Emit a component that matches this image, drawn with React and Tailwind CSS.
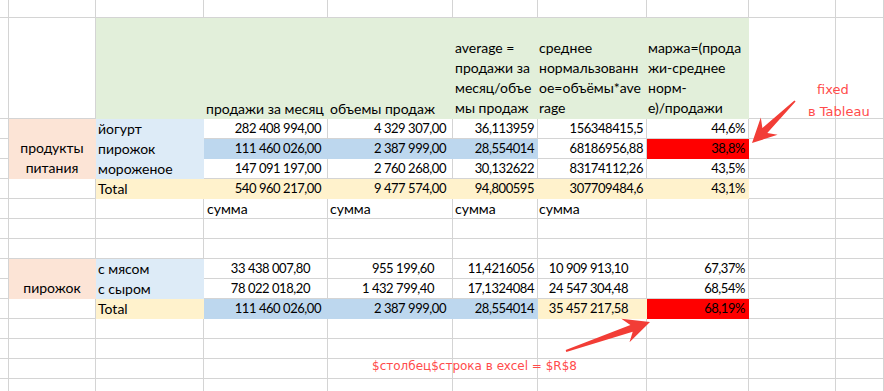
import React from "react";

const grid = "border-[#d4d4d4]";
const fills = {
  g: "bg-[#e2efda] border-[#e2efda]",
  p: "bg-[#fce4d6] border-[#fce4d6]",
  lb: "bg-[#ddebf7] border-[#ddebf7]",
  y: "bg-[#fff2cc] border-[#fff2cc]",
  b: "bg-[#bdd7ee] border-[#bdd7ee]",
  r: "bg-[#ff0000] border-[#ff0000]",
};

// c(text, fill, extra classes)
const c = (t = "", f = null, x = "") => ({ t, f, x });
const N = "justify-end text-[13px] tracking-[-0.45px]";
const R = `${N} pr-[6px]`;
const Rg = `${N} pr-[3px]`;
const Rb = `${N} pr-[18px]`;
const L = "pl-[2px]";

const empty = (n) => Array.from({ length: n }, () => c());

const header = [
  c(),
  c(),
  c("", "g"),
  c("продажи за месяц", "g", "pl-[2px]"),
  c("объемы продаж", "g", "pl-[2px]"),
  c(["average =", "продажи за", "месяц/объе", "мы продаж"], "g", "pl-[2px]"),
  c(["среднее", "нормальзованн", "ое=объёмы*ave", "rage"], "g", "pl-[1px]"),
  c(["маржа=(прода", "жи-среднее", "норм-", "е)/продажи"], "g", "pl-[1px]"),
  c(),
  c(),
];

const rows = [
  [
    c(),
    c(["продукты", "питания"], "p", "row-span-3 justify-center text-center"),
    c("йогурт", "lb", L),
    c("282 408 994,00", null, R),
    c("4 329 307,00", null, R),
    c("36,113959", null, Rg),
    c("156348415,5", null, Rg),
    c("44,6%", null, Rg),
    c(),
    c(),
  ],
  [
    c(),
    c("пирожок", "lb", L),
    c("111 460 026,00", "b", R),
    c("2 387 999,00", "b", R),
    c("28,554014", "b", Rg),
    c("68186956,88", null, Rg),
    c("38,8%", "r", Rg),
    c(),
    c(),
  ],
  [
    c(),
    c("мороженое", "lb", L),
    c("147 091 197,00", null, R),
    c("2 760 268,00", null, R),
    c("30,132622", null, Rg),
    c("83174112,26", null, Rg),
    c("43,5%", null, Rg),
    c(),
    c(),
  ],
  [
    c(),
    c(),
    c("Total", "y", L),
    c("540 960 217,00", "y", R),
    c("9 477 574,00", "y", R),
    c("94,800595", "y", Rg),
    c("307709484,6", "y", Rg),
    c("43,1%", "y", Rg),
    c(),
    c(),
  ],
  [
    c(),
    c(),
    c(),
    c("сумма", null, "pl-[3px]"),
    c("сумма", null, "pl-[2px]"),
    c("сумма", null, "pl-[2px]"),
    c("сумма", null, "pl-[1px]"),
    c(),
    c(),
    c(),
  ],
  empty(10),
  empty(10),
  [
    c(),
    c(["пирожок"], "p", "row-span-2 justify-center text-center"),
    c("с мясом", "lb", L),
    c("33 438 007,80", null, `${N} pr-[17px]`),
    c("955 199,60", null, Rb),
    c("11,4216056", null, Rg),
    c("10 909 913,10", null, Rb),
    c("67,37%", null, Rg),
    c(),
    c(),
  ],
  [
    c(),
    c("с сыром", "lb", L),
    c("78 022 018,20", null, `${N} pr-[17px]`),
    c("1 432 799,40", null, Rb),
    c("17,1324084", null, Rg),
    c("24 547 304,48", null, Rb),
    c("68,54%", null, Rg),
    c(),
    c(),
  ],
  [
    c(),
    c(),
    c("Total", "y", L),
    c("111 460 026,00", "b", R),
    c("2 387 999,00", "b", R),
    c("28,554014", "b", Rg),
    c("35 457 217,58", "y", Rb),
    c("68,19%", "r", Rg),
    c(),
    c(),
  ],
  empty(10),
  empty(10),
  empty(10),
  empty(10),
];

function Cell({ cell }) {
  const lines = Array.isArray(cell.t) ? cell.t : null;
  return (
    <div
      className={`flex items-end border-r border-b whitespace-nowrap ${
        cell.f ? fills[cell.f] : grid
      } ${cell.x}`}
    >
      {lines ? (
        <div className="leading-[20px]">
          {lines.map((l, i) => (
            <div key={i}>{l}</div>
          ))}
        </div>
      ) : (
        <span className="leading-[19px]">{cell.t}</span>
      )}
    </div>
  );
}

function arrow(x1, y1, x2, y2, shaftW, headW, headL) {
  const dx = x2 - x1;
  const dy = y2 - y1;
  const len = Math.hypot(dx, dy);
  const ux = dx / len;
  const uy = dy / len;
  const nx = -uy;
  const ny = ux;
  const bx = x2 - ux * headL * 0.75;
  const by = y2 - uy * headL * 0.75;
  const wx = x2 - ux * headL;
  const wy = y2 - uy * headL;
  const p = [
    [x1 + nx * 0.9, y1 + ny * 0.9],
    [bx + (nx * shaftW) / 2, by + (ny * shaftW) / 2],
    [wx + (nx * headW) / 2, wy + (ny * headW) / 2],
    [x2, y2],
    [wx - (nx * headW) / 2, wy - (ny * headW) / 2],
    [bx - (nx * shaftW) / 2, by - (ny * shaftW) / 2],
    [x1 - nx * 0.9, y1 - ny * 0.9],
  ];
  return p.map((q) => q.map((v) => v.toFixed(1)).join(",")).join(" ");
}

export default function App() {
  return (
    <div className="relative w-[884px] h-[391px] overflow-hidden bg-white text-black font-['Lato','Noto_Sans',sans-serif] text-[14px]">
      <div className="grid grid-cols-[9px_87px_108px_124px_125px_85px_109px_102px_87px_1fr] grid-rows-[18px_101px_repeat(14,20px)]">
        {empty(10).map((cell, i) => (
          <Cell key={`t${i}`} cell={cell} />
        ))}
        {header.map((cell, i) => (
          <Cell key={`h${i}`} cell={cell} />
        ))}
        {rows.map((row, r) =>
          row.map((cell, i) => <Cell key={`${r}-${i}`} cell={cell} />)
        )}
      </div>

      <svg
        className="absolute inset-0 pointer-events-none"
        width="884"
        height="391"
        viewBox="0 0 884 391"
      >
        <polygon points={arrow(795, 101, 752, 143, 7, 24, 24)} fill="#f23d36" />
        <polygon points={arrow(566, 351, 650, 322, 7, 25, 26)} fill="#f23d36" />
      </svg>

      <div className="absolute left-[817px] top-[81px] text-[13px] leading-[18px] text-[#ff4b4b] font-['DejaVu_Sans',sans-serif]">
        fixed
      </div>
      <div className="absolute left-[808px] top-[103px] text-[13px] leading-[18px] text-[#ff4b4b] font-['DejaVu_Sans',sans-serif]">
        в Tableau
      </div>
      <div className="absolute left-[372px] top-[357px] text-[12px] leading-[18px] text-[#ff4b4b] font-['DejaVu_Sans',sans-serif]">
        $столбец$строка в excel = $R$8
      </div>
    </div>
  );
}
